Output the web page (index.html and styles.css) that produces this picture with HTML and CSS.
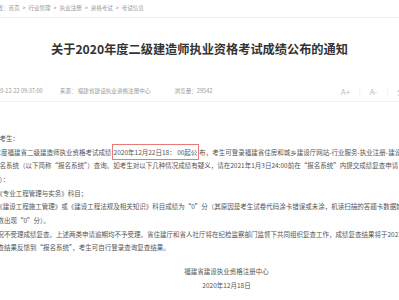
FILE: index.html
```html
<!DOCTYPE html>
<html lang="zh-CN">
<head>
  <meta charset="UTF-8">
  <meta name="viewport" content="width=device-width, initial-scale=1.0">
  <title>关于2020年度二级建造师执业资格考试成绩公布的通知</title>
  <link rel="stylesheet" href="styles.css">
</head>
<body>
  <div class="crumbs">
    <span>位置：</span><span>首页</span><span class="sep">&gt;</span><span>行业管理</span><span class="sep">&gt;</span><span>执业注册</span><span class="sep">&gt;</span><span>资格考试</span><span class="sep">&gt;</span><span>考试信息</span>
  </div>

  <h1 class="title">关于2020年度二级建造师执业资格考试成绩公布的通知</h1>

  <div class="meta">
    <span class="meta-date">2020-12-22 09:37:00</span>
    <span class="meta-from">来源：&nbsp;福建省建设执业资格注册中心</span>
    <span class="meta-views">浏览量：29542</span>
    <div class="meta-tools">
      <span>A+</span><span class="bar">|</span><span>A-</span><span class="bar">|</span><span>分</span>
    </div>
  </div>

  <div class="article">
    <div class="line">各考生：</div>
    <div class="line shift">0年度福建省二级建造师执业资格考试成绩<span class="mark">2020年12月22日18：&nbsp;00起公</span>布，考生可登录福建省住房和城乡建设厅网站-行业服务-执业注册-建设执业资格注册</div>
    <div class="line">报名系统（以下简称“报名系统”）查询。如考生对以下几种情况成绩有疑义，请在2021年1月3日24:00前在“报名系统”内提交成绩复查申请</div>
    <div class="line">请）：</div>
    <div class="line">、《专业工程管理与实务》科目；</div>
    <div class="line">、《建设工程施工管理》或《建设工程法规及相关知识》科目成绩为“0”分（其原因是考生试卷代码涂卡错误或未涂，机读扫描的答题卡数据缺失</div>
    <div class="line shift">分数出现“0”分）。</div>
    <div class="line shift">情况不受理成绩复查。上述两类申请逾期均不予受理。省住建厅和省人社厅将在纪检监察部门监督下共同组织复查工作，成绩复查结果将于2021年</div>
    <div class="line shift">复查结果反馈到“报名系统”，考生可自行登录查询复查结果。</div>
  </div>

  <div class="sign">
    <div>福建省建设执业资格注册中心</div>
    <div>2020年12月18日</div>
  </div>
</body>
</html>
```

FILE: styles.css
```css
html, body {
  margin: 0;
  padding: 0;
  background-color: #fff;
  overflow: hidden;
}
body {
  font-family: "Noto Sans CJK SC", "Noto Sans", sans-serif;
  color: #555;
  width: 399px;
}
.crumbs {
  height: 17px;
  line-height: 17px;
  margin-left: -8px;
  font-size: 5.5px;
  color: #999;
  white-space: nowrap;
  border-bottom: 1px solid #eee;
}
.crumbs .sep {
  margin: 0 3px;
}
.title {
  margin: 0;
  padding-top: 21px;
  height: 20px;
  line-height: 20px;
  font-size: 12.2px;
  font-weight: bold;
  color: #333;
  text-align: center;
  white-space: nowrap;
}
.meta {
  display: flex;
  align-items: center;
  margin-top: 22px;
  height: 20px;
  margin-left: -9px;
  font-size: 5.6px;
  color: #999;
  white-space: nowrap;
  border-bottom: 1px solid #f0f0f0;
}
.meta-date {
  margin-right: 17px;
}
.meta-from {
  margin-right: 24px;
}
.meta-tools {
  margin-left: auto;
  margin-right: -6px;
  display: flex;
  align-items: center;
  font-size: 8px;
  color: #bbb;
}
.meta-tools .bar {
  margin: 0 9px;
  font-size: 6px;
  color: #ddd;
}
.article {
  margin-top: 30px;
  margin-left: -7px;
  font-size: 6.5px;
  line-height: 13.65px;
  color: #555;
}
.line {
  white-space: nowrap;
}
.line.shift {
  margin-left: -2px;
}
.mark {
  border: 1px solid #e87a7a;
  padding: 2px 1px;
}
.sign {
  margin-top: 9px;
  padding-left: 54px;
  font-size: 6.5px;
  line-height: 14px;
  text-align: center;
  color: #555;
}
```
